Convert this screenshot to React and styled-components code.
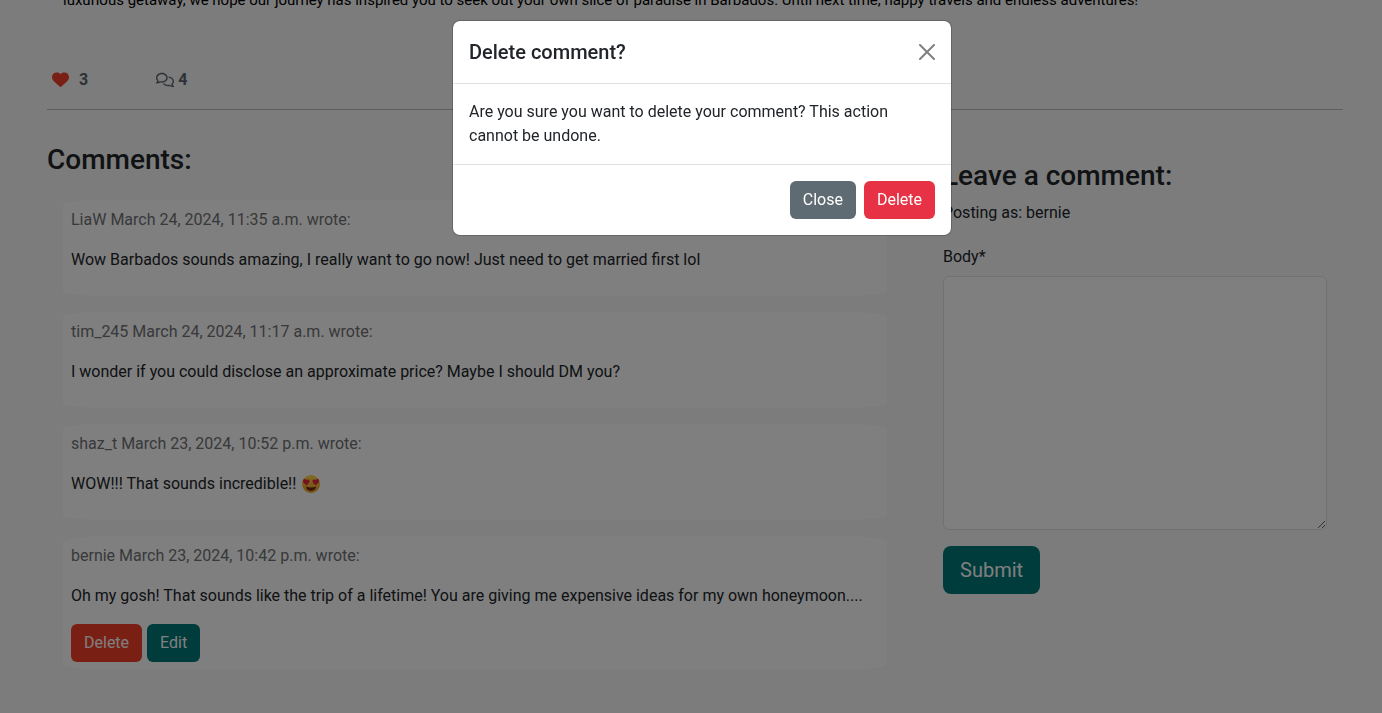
import React from "react";
import styled, { createGlobalStyle, css } from "styled-components";
import { FaHeart, FaRegComments } from "react-icons/fa6";

const GlobalStyle = createGlobalStyle`
  *, *::before, *::after { box-sizing: border-box; }
  body {
    margin: 0;
    background: #f8f8f8;
    color: #212529;
    font-family: Roboto, "Liberation Sans", sans-serif;
    font-size: 16px;
    line-height: 24px;
    overflow: hidden;
  }
  h1, h2, p { margin: 0; }
  button, textarea { font: inherit; }
`;

const Page = styled.main`
  padding: 0 39px 43px 47px;
  min-height: 100vh;
`;

const Closing = styled.p`
  margin-top: -12px;
  padding: 0 16px;
  font-size: 15px;
  color: #000;
`;

const Stats = styled.div`
  display: flex;
  align-items: center;
  gap: 68px;
  height: 98px;
  padding: 38px 0 0 5px;
  color: #5a656d;
  font-weight: 700;
  border-bottom: 1px solid #bcbdbe;
`;

const Stat = styled.div`
  display: flex;
  align-items: center;
  gap: ${(p) => p.$gap}px;
`;

const Likes = styled.button`
  display: flex;
  padding: 0;
  border: 0;
  background: none;
  color: #f53f28;
`;

const Columns = styled.div`
  display: grid;
  grid-template-columns: 2fr 1fr;
`;

const Comments = styled.section`
  padding: 33px 24px 0 0;
`;

const Title = styled.h2`
  font-size: 28px;
  line-height: 34px;
  font-weight: 500;
`;

const CommentList = styled.div`
  display: grid;
  gap: 16px;
  padding: 23px 0 0 16px;
`;

const Comment = styled.article`
  display: grid;
  gap: 16px;
  padding: 8px 8px ${(p) => (p.$own ? 8 : 24)}px;
  border-radius: 5%;
  background: #fff;
`;

const Byline = styled.p`
  color: #6f7275;
`;

const Actions = styled.div`
  display: flex;
  gap: 5px;
`;

const tones = {
  red: "#f53f28",
  teal: "#007878",
  gray: "#5f6b72",
  danger: "#e63244",
};

const Button = styled.button`
  padding: 7px 13px;
  border: 0;
  border-radius: 6px;
  color: #fff;
  background: ${(p) => tones[p.$tone]};
  ${(p) =>
    p.$large &&
    css`
      padding: 9px 17px;
      border-radius: 8px;
      font-size: 20px;
      line-height: 30px;
    `}
`;

const CommentForm = styled.form`
  padding: 49px 16px 0 32px;
`;

const PostingAs = styled.p`
  padding: 8px 0 20px;
`;

const Label = styled.label`
  display: block;
  margin-bottom: 7px;
`;

const TextArea = styled.textarea`
  display: block;
  width: 100%;
  margin-bottom: 16px;
  padding: 6px 12px;
  height: 254px;
  border: 1px solid #dee2e6;
  border-radius: 6px;
  background: #fff;
  resize: vertical;
`;

const Backdrop = styled.div`
  position: fixed;
  inset: 0;
  display: flex;
  justify-content: center;
  align-items: flex-start;
  padding: 20px 0 0 22px;
  background: rgba(0, 0, 0, 0.5);
`;

const Dialog = styled.div`
  width: 500px;
  border: 1px solid rgba(0, 0, 0, 0.18);
  border-radius: 8px;
  background: #fff;
  background-clip: padding-box;
`;

const DialogHeader = styled.header`
  display: flex;
  align-items: center;
  justify-content: space-between;
  padding: 16px;
  border-bottom: 1px solid #dee2e6;
`;

const DialogTitle = styled.h1`
  font-size: 20px;
  line-height: 30px;
  font-weight: 500;
`;

const CloseIcon = styled.button`
  display: flex;
  padding: 0;
  border: 0;
  background: none;
  color: #808080;
`;

const DialogBody = styled.div`
  padding: 16px;
`;

const DialogFooter = styled.footer`
  display: flex;
  justify-content: flex-end;
  gap: 8px;
  padding: 16px;
  border-top: 1px solid #dee2e6;
`;

const Emoji = styled.svg`
  display: inline-block;
  width: 20px;
  height: 20px;
  margin-left: 1px;
  vertical-align: -5px;
`;

const HeartEyes = () => (
  <Emoji viewBox="0 0 20 20" role="img" aria-label="Smiling face with heart eyes">
    <defs>
      <linearGradient id="face" x1="0" y1="0" x2="0" y2="1">
        <stop offset="0" stopColor="#ffd94a" />
        <stop offset="1" stopColor="#f09a28" />
      </linearGradient>
    </defs>
    <circle cx="10" cy="10" r="9" fill="url(#face)" />
    <path d="M5 12.6c3 1.200 7 1.200 10 0-.2 2.800-2.200 4.400-5 4.400s-4.800-1.600-5-4.400z" fill="#6b2d12" />
    <path d="M5.800 11.200C3.400 9.900 1.600 8.400 2 6.500c.4-1.700 2.500-1.900 3.300-.4 1.100-1.300 3.300-.7 3.300 1 0 1.400-1.200 2.800-2.800 4.100z" fill="#e8283c" />
    <path d="M14.200 11.200c2.400-1.300 4.200-2.800 3.800-4.700-.4-1.700-2.500-1.900-3.300-.4-1.100-1.300-3.300-.7-3.300 1 0 1.400 1.200 2.800 2.800 4.100z" fill="#e8283c" />
  </Emoji>
);

const comments = [
  { author: "LiaW", date: "March 24, 2024, 11:35 a.m.", body: "Wow Barbados sounds amazing, I really want to go now! Just need to get married first lol" },
  { author: "tim_245", date: "March 24, 2024, 11:17 a.m.", body: "I wonder if you could disclose an approximate price? Maybe I should DM you?" },
  { author: "shaz_t", date: "March 23, 2024, 10:52 p.m.", body: <>WOW!!! That sounds incredible!! <HeartEyes /></> },
  { author: "bernie", date: "March 23, 2024, 10:42 p.m.", own: true, body: "Oh my gosh! That sounds like the trip of a lifetime! You are giving me expensive ideas for my own honeymoon...." },
];

export default function App() {
  return (
    <>
      <GlobalStyle />
      <Page>
        <Closing>
          luxurious getaway, we hope our journey has inspired you to seek out your own slice of paradise in Barbados. Until next time, happy travels and endless adventures!
        </Closing>
        <Stats>
          <Stat $gap={10}>
            <Likes type="button" aria-label="Like"><FaHeart size={17} /></Likes>
            3
          </Stat>
          <Stat $gap={4}>
            <FaRegComments size={18} />
            4
          </Stat>
        </Stats>
        <Columns>
          <Comments>
            <Title>Comments:</Title>
            <CommentList>
              {comments.map((c) => (
                <Comment key={c.author} $own={c.own}>
                  <Byline>{c.author} {c.date} wrote:</Byline>
                  <p>{c.body}</p>
                  {c.own && (
                    <Actions>
                      <Button type="button" $tone="red">Delete</Button>
                      <Button type="button" $tone="teal">Edit</Button>
                    </Actions>
                  )}
                </Comment>
              ))}
            </CommentList>
          </Comments>
          <CommentForm>
            <Title>Leave a comment:</Title>
            <PostingAs>Posting as: bernie</PostingAs>
            <Label htmlFor="body">Body*</Label>
            <TextArea id="body" name="body" />
            <Button type="button" $tone="teal" $large>Submit</Button>
          </CommentForm>
        </Columns>
      </Page>
      <Backdrop>
        <Dialog role="dialog" aria-modal="true" aria-labelledby="dialog-title">
          <DialogHeader>
            <DialogTitle id="dialog-title">Delete comment?</DialogTitle>
            <CloseIcon type="button" aria-label="Close dialog">
              <svg width="16" height="16" viewBox="0 0 16 16" fill="none" stroke="currentColor" strokeWidth="2" strokeLinecap="round">
                <path d="M1 1l14 14M15 1L1 15" />
              </svg>
            </CloseIcon>
          </DialogHeader>
          <DialogBody>
            Are you sure you want to delete your comment? This action cannot be undone.
          </DialogBody>
          <DialogFooter>
            <Button type="button" $tone="gray">Close</Button>
            <Button type="button" $tone="danger">Delete</Button>
          </DialogFooter>
        </Dialog>
      </Backdrop>
    </>
  );
}
